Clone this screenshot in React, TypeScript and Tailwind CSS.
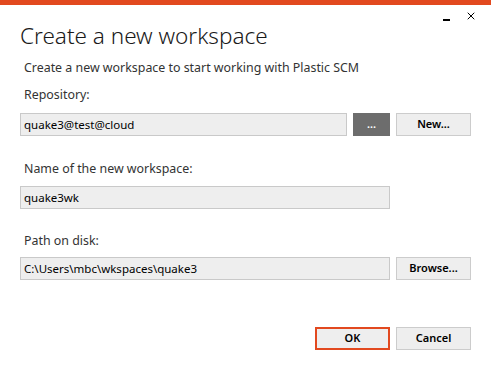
import { X } from "lucide-react";

const font = { fontFamily: '"Segoe UI", "Noto Sans", "Open Sans", sans-serif' };

function Field({ value, className }: { value: string; className: string }) {
  return (
    <div className={"flex h-[23px] items-center border border-[#c9c9c9] bg-[#eeeeee] px-[3px] text-[11.5px] text-black " + className}>
      {value}
    </div>
  );
}

function Button({ label, className }: { label: string; className?: string }) {
  return (
    <button className={"flex h-[23px] w-[75px] items-center justify-center border border-[#cccccc] bg-[#eeeeee] text-[11px] font-semibold text-black " + (className || "")}>
      {label}
    </button>
  );
}

export default function App() {
  return (
    <div className="relative h-[370px] w-[491px] overflow-hidden bg-white text-[#333333]" style={font}>
      <div className="h-[5px] bg-[#e2491f]" />
      <div className="absolute right-[14px] top-[10px] flex items-center gap-[15px] text-black">
        <span className="mt-[8px] block h-[2px] w-[7px] bg-black" />
        <X size={12} strokeWidth={2} />
      </div>
      <div className="pl-[20px]">
        <h1 className="mt-[15px] text-[22.5px] font-light leading-[32px] text-[#1a1a1a]">Create a new workspace</h1>
        <p className="mt-[7px] pl-[4px] text-[12.4px] leading-[18px]">Create a new workspace to start working with Plastic SCM</p>
        <p className="mt-[9px] pl-[4px] text-[12.4px] leading-[18px]">Repository:</p>
        <div className="mt-[9px] flex gap-[6px]">
          <Field value="quake3@test@cloud" className="w-[327px]" />
          <button className="flex h-[23px] w-[37px] items-center justify-center bg-[#6d6d6d] text-[11px] font-semibold text-white">...</button>
          <Button label="New..." />
        </div>
        <p className="mt-[24px] pl-[4px] text-[12.4px] leading-[18px]">Name of the new workspace:</p>
        <Field value="quake3wk" className="mt-[8px] w-[370px]" />
        <p className="mt-[23px] pl-[4px] text-[12.4px] leading-[18px]">Path on disk:</p>
        <div className="mt-[7px] flex gap-[6px]">
          <Field value="C:\Users\mbc\wkspaces\quake3" className="w-[370px]" />
          <Button label="Browse..." />
        </div>
        <div className="mt-[47px] flex justify-end gap-[6px] pr-[20px]">
          <Button label="OK" className="border-2 border-[#e2491f]" />
          <Button label="Cancel" />
        </div>
      </div>
    </div>
  );
}
